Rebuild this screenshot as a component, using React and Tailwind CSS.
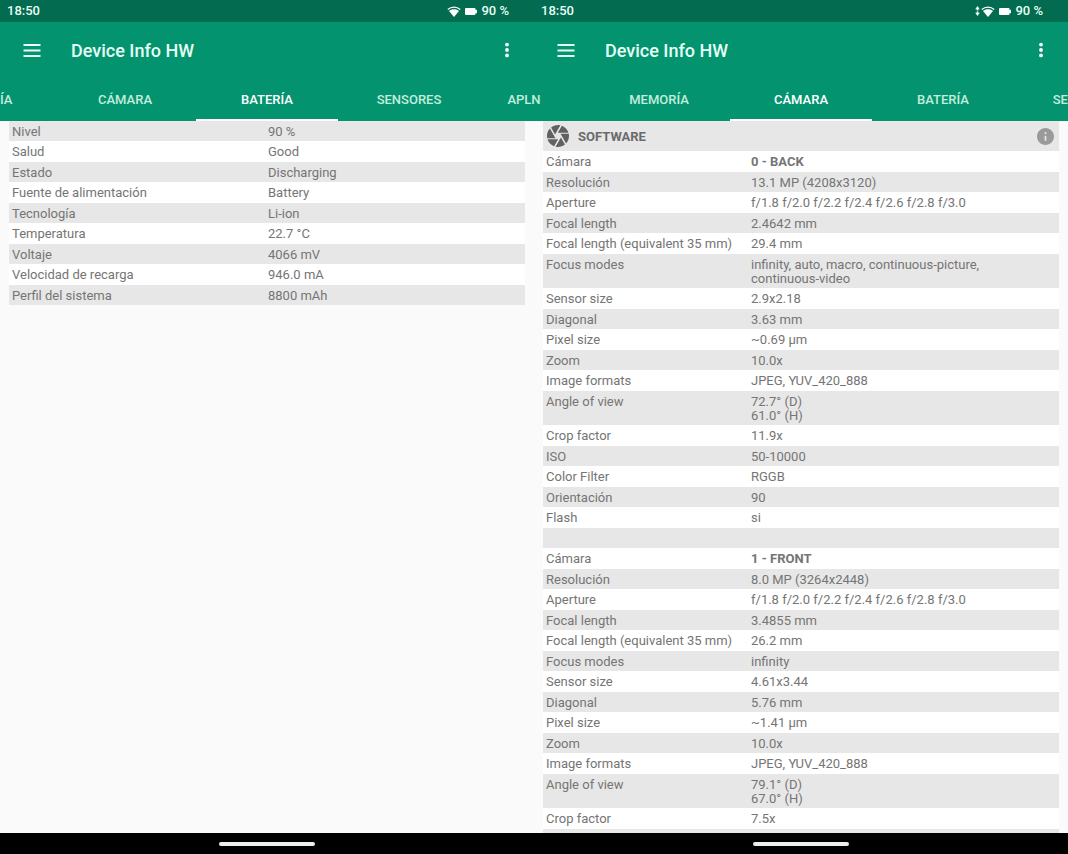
const battery = [
  ["Nivel", "90 %"],
  ["Salud", "Good"],
  ["Estado", "Discharging"],
  ["Fuente de alimentación", "Battery"],
  ["Tecnología", "Li-ion"],
  ["Temperatura", "22.7 °C"],
  ["Voltaje", "4066 mV"],
  ["Velocidad de recarga", "946.0 mA"],
  ["Perfil del sistema", "8800 mAh"]
]

const camera = [
  ["Cámara", "0 - BACK", true],
  ["Resolución", "13.1 MP (4208x3120)"],
  ["Aperture", "f/1.8 f/2.0 f/2.2 f/2.4 f/2.6 f/2.8 f/3.0"],
  ["Focal length", "2.4642 mm"],
  ["Focal length (equivalent 35 mm)", "29.4 mm"],
  ["Focus modes", "infinity, auto, macro, continuous-picture,\ncontinuous-video"],
  ["Sensor size", "2.9x2.18"],
  ["Diagonal", "3.63 mm"],
  ["Pixel size", "~0.69 µm"],
  ["Zoom", "10.0x"],
  ["Image formats", "JPEG, YUV_420_888"],
  ["Angle of view", "72.7° (D)\n61.0° (H)"],
  ["Crop factor", "11.9x"],
  ["ISO", "50-10000"],
  ["Color Filter", "RGGB"],
  ["Orientación", "90"],
  ["Flash", "si"],
  ["", ""],
  ["Cámara", "1 - FRONT", true],
  ["Resolución", "8.0 MP (3264x2448)"],
  ["Aperture", "f/1.8 f/2.0 f/2.2 f/2.4 f/2.6 f/2.8 f/3.0"],
  ["Focal length", "3.4855 mm"],
  ["Focal length (equivalent 35 mm)", "26.2 mm"],
  ["Focus modes", "infinity"],
  ["Sensor size", "4.61x3.44"],
  ["Diagonal", "5.76 mm"],
  ["Pixel size", "~1.41 µm"],
  ["Zoom", "10.0x"],
  ["Image formats", "JPEG, YUV_420_888"],
  ["Angle of view", "79.1° (D)\n67.0° (H)"],
  ["Crop factor", "7.5x"],
  ["", ""]
]

function StatusBar({ syncing }) {
  return (
    <div className="flex h-[22px] items-center justify-between bg-[#036b50] pr-[25px] pl-[7px] text-[13px] font-medium text-[#e6fff5]">
      <span>18:50</span>
      <div className="flex items-center">
        {syncing && (
          <svg viewBox="0 0 5 10" className="h-[10px] w-[5px] fill-current">
            <path d="M2.5 0 4.8 3.2H3.3v1.2H1.7V3.2H.2zM2.5 10 .2 6.8h1.5V5.6h1.6v1.2h1.5z" />
          </svg>
        )}
        <svg viewBox="0 0 14 11" className="mr-1 ml-px h-[11px] w-[14px]">
          <path d="M.8 3.5C4.4.3 9.6.3 13.2 3.5" fill="none" stroke="white" strokeWidth="1.3" />
          <path d="M2 5c2.7-2.3 7.3-2.3 10 0L7 11z" fill="white" />
        </svg>
        <svg viewBox="0 0 12 7" className="mr-1 h-[7px] w-[12px] fill-white">
          <rect width="10.5" height="7" rx="1" />
          <rect x="10" y="1.7" width="2" height="3.6" rx=".5" />
        </svg>
        <span>90 %</span>
      </div>
    </div>
  )
}

function AppBar() {
  return (
    <div className="flex h-14 items-center pr-5 pl-[23px] text-[#e6fff5]">
      <button aria-label="Menú" className="mr-[30px]">
        <svg viewBox="0 0 18 13" className="h-[13px] w-[18px] fill-current">
          <path d="M.5 0h17v2H.5zM.5 5.5h17v2H.5zM.5 11h17v2H.5z" />
        </svg>
      </button>
      <h1 className="flex-1 text-[18px] font-medium">Device Info HW</h1>
      <button aria-label="Más opciones" className="flex w-[14px] justify-center">
        <svg viewBox="0 0 4 16" className="h-4 w-1 fill-white">
          <circle cx="2" cy="2.6" r="1.9" />
          <circle cx="2" cy="8" r="1.9" />
          <circle cx="2" cy="13.4" r="1.9" />
        </svg>
      </button>
    </div>
  )
}

function Tab({ label, active, width = "w-[142px]" }) {
  return (
    <button
      role="tab"
      aria-selected={!!active}
      className={`${width} shrink-0 border-b-2 pt-[2px] text-center text-[13px] font-medium ${
        active ? "border-white text-white" : "border-transparent text-[#c4eddd]"
      }`}
    >
      {label}
    </button>
  )
}

function InfoTable({ rows, grayFirst, labelWidth }) {
  return (
    <table className="w-full table-fixed border-collapse text-left text-[13px] leading-[14px] text-[#757575]">
      <colgroup>
        <col className={labelWidth} />
        <col />
      </colgroup>
      <tbody>
        {rows.map(([label, value, bold], i) => {
          const gray = (i % 2 === 0) === grayFirst
          const pad = gray ? "pt-1 pb-[2px]" : "pt-1 pb-[3px]"
          return (
            <tr key={i} className={gray ? "h-[20px] bg-[#e7e7e7]" : "h-[21px] bg-white"}>
              <th scope="row" className={`pl-[3px] align-top font-normal ${pad}`}>{label}</th>
              <td className={`align-top whitespace-pre-line ${pad} ${bold ? "font-bold" : ""}`}>{value}</td>
            </tr>
          )
        })}
      </tbody>
    </table>
  )
}

function Phone({ syncing, tabs, children }) {
  return (
    <section className="flex min-w-0 flex-1 flex-col">
      <StatusBar syncing={syncing} />
      <header className="bg-[#03946f]">
        <AppBar />
        {tabs}
      </header>
      <main className="h-0 flex-1 overflow-hidden px-[9px]">{children}</main>
      <footer className="flex h-[21px] items-center justify-center bg-black">
        <div className="h-1 w-24 rounded-full bg-[#eeeeee]" />
      </footer>
    </section>
  )
}

function App() {
  return (
    <div className="flex h-screen overflow-hidden bg-[#fafafa] font-[Roboto,sans-serif]">
      <Phone
        tabs={
          // the last tab runs past the edge of the screen
          <div role="tablist" className="relative z-10 -ml-[89px] flex h-[43px]">
            <Tab label="MEMORÍA" width="w-[143px]" />
            <Tab label="CÁMARA" />
            <Tab label="BATERÍA" active />
            <Tab label="SENSORES" />
            <Tab label="APLN" width="w-[88px]" />
          </div>
        }
      >
        <InfoTable rows={battery} grayFirst labelWidth="w-[259px]" />
      </Phone>

      <Phone
        syncing
        tabs={
          <div role="tablist" className="flex h-[43px] overflow-hidden pl-[54px]">
            <Tab label="MEMORÍA" />
            <Tab label="CÁMARA" active />
            <Tab label="BATERÍA" />
            <Tab label="SENSORES" />
          </div>
        }
      >
        <div className="flex h-[30px] items-center bg-[#e7e7e7] pr-[5px] pl-1 text-[#616161]">
          <svg viewBox="2 2 20 20" className="mr-[9px] h-[22px] w-[22px] fill-current">
            <path d="M9.4 10.5l4.77-8.26C13.47 2.09 12.75 2 12 2c-2.4 0-4.6.85-6.32 2.25l3.66 6.35.06-.1zM21.54 9c-.92-2.92-3.15-5.26-6-6.34L11.88 9h9.66zm.26 1h-7.49l.29.5 4.76 8.25C21 16.97 22 14.61 22 12c0-.69-.07-1.35-.2-2zM8.54 12l-3.9-6.75C3.01 7.03 2 9.39 2 12c0 .69.07 1.35.2 2h7.49l-1.15-2zm-6.08 3c.92 2.92 3.15 5.26 6 6.34L12.12 15H2.46zm11.27 0l-3.9 6.76c.7.15 1.42.24 2.17.24 2.4 0 4.6-.85 6.32-2.25l-3.66-6.35-.93 1.6z" />
          </svg>
          <h2 className="flex-1 pt-px text-[13px] font-bold text-[#6b6b6b]">SOFTWARE</h2>
          <button aria-label="Información">
            <svg viewBox="2 2 20 20" className="h-[17px] w-[17px] fill-[#9a9a9a]">
              <path d="M12 2C6.48 2 2 6.48 2 12s4.48 10 10 10 10-4.48 10-10S17.52 2 12 2zm1 15h-2v-6h2v6zm0-8h-2V7h2v2z" />
            </svg>
          </button>
        </div>
        <InfoTable rows={camera} grayFirst={false} labelWidth="w-[208px]" />
      </Phone>
    </div>
  )
}

export default App
